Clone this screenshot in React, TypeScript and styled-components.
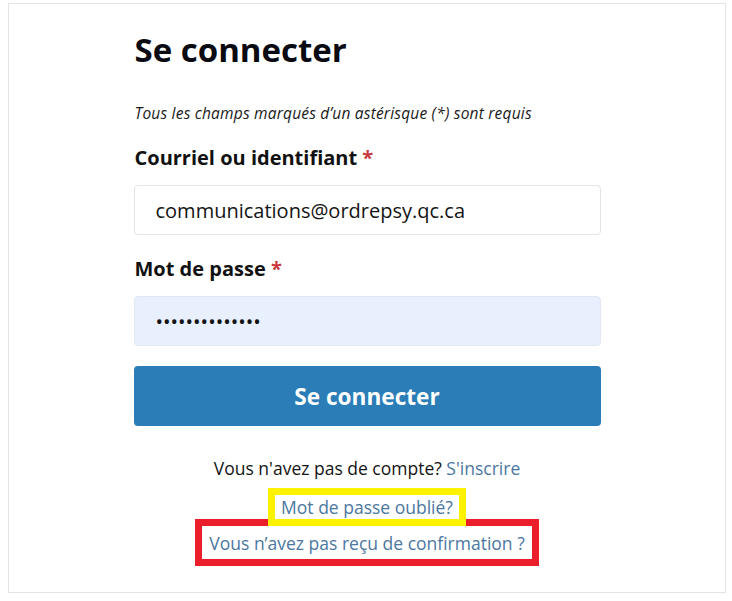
import { createGlobalStyle, styled } from 'styled-components';

const GlobalStyle = createGlobalStyle`
    html, body {
        margin: 0;
        padding: 0;
        background: #ffffff;
    }
    body {
        font-family: 'Open Sans', 'Noto Sans', sans-serif;
        color: #111111;
    }
    * {
        box-sizing: border-box;
    }
`;

const App = () => {
    return (
        <>
            <GlobalStyle />
            <Card>
                <Form onSubmit={(e) => e.preventDefault()}>
                    <Title>Se connecter</Title>
                    <Note>Tous les champs marqués d’un astérisque (*) sont requis</Note>

                    <Label htmlFor="login">
                        Courriel ou identifiant <Required>*</Required>
                    </Label>
                    <Field id="login" type="text" readOnly defaultValue="communications@ordrepsy.qc.ca" />

                    <Label htmlFor="password" $gap={22}>
                        Mot de passe <Required>*</Required>
                    </Label>
                    <Field id="password" type="password" readOnly defaultValue="motdepasse1234" $autofill />

                    <Submit type="submit">Se connecter</Submit>

                    <Links>
                        <Line>
                            Vous n'avez pas de compte? <Link href="#">S'inscrire</Link>
                        </Line>
                        <Highlight $color="#fff200" $top>
                            <Link href="#">Mot de passe oublié?</Link>
                        </Highlight>
                        <Highlight $color="#ea1f29">
                            <Link href="#">Vous n’avez pas reçu de confirmation ?</Link>
                        </Highlight>
                    </Links>
                </Form>
            </Card>
        </>
    );
};

export default App;

const Card = styled.div`
    margin: 3px 6px 7px 8px;
    border: 1px solid #e4e4e4;
    padding: 27px 0 26px;
    display: flex;
    justify-content: center;
`;

const Form = styled.form`
    width: 467px;
    display: flex;
    flex-direction: column;
`;

const Title = styled.h1`
    margin: 0;
    font-size: 33px;
    line-height: 38px;
    font-weight: 700;
    color: #0a0a12;
    padding-left: 1px;
`;

const Note = styled.p`
    margin: 34px 0 0;
    font-size: 15.5px;
    line-height: 20px;
    letter-spacing: 0.2px;
    font-style: italic;
    color: #1a1a1a;
    padding-left: 1px;
`;

const Label = styled.label<{ $gap?: number }>`
    margin-top: ${({ $gap }) => $gap ?? 23}px;
    font-size: 20px;
    line-height: 24px;
    font-weight: 700;
    color: #111111;
    padding-left: 1px;
`;

const Required = styled.span`
    color: #c9393f;
`;

const Field = styled.input<{ $autofill?: boolean }>`
    margin-top: 15px;
    height: 50px;
    width: 100%;
    border: 1px solid ${({ $autofill }) => ($autofill ? '#e2e8f2' : '#e4e4e4')};
    border-radius: 4px;
    background: ${({ $autofill }) => ($autofill ? '#e8f0fe' : '#ffffff')};
    padding: 0 21px;
    font-family: 'Open Sans', sans-serif;
    font-size: 20px;
    color: #141414;
    outline: none;
`;

const Submit = styled.button`
    margin-top: 20px;
    height: 60px;
    width: 100%;
    border: none;
    border-radius: 4px;
    background: #2a7db7;
    color: #ffffff;
    font-family: 'Open Sans', sans-serif;
    font-size: 22.6px;
    font-weight: 700;
    cursor: pointer;
`;

const Links = styled.div`
    margin-top: 31px;
    display: flex;
    flex-direction: column;
    align-items: center;
    font-size: 17.5px;
    line-height: 22px;
`;

const Line = styled.div`
    color: #141414;
`;

const Link = styled.a`
    color: #4b77a1;
    text-decoration: none;
`;

const Highlight = styled.div<{ $color: string; $top?: boolean }>`
    position: relative;
    z-index: ${({ $top }) => ($top ? 1 : 0)};
    margin-top: ${({ $top }) => ($top ? 9 : -7)}px;
    border: 7.5px solid ${({ $color }) => $color};
    background: #ffffff;
    padding: ${({ $top }) => ($top ? '1px 6px' : '5.5px 7px')};
`;
